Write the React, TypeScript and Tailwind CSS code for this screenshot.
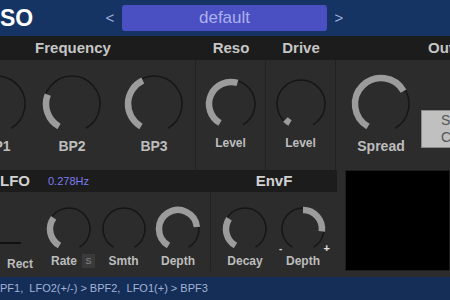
import React from 'react';

type KnobProps = {
  size: number;
  r: number;
  v: number;
  bi?: boolean;
};

const pt = (c: number, r: number, deg: number) => {
  const a = ((deg - 90) * Math.PI) / 180;
  return [c + r * Math.cos(a), c + r * Math.sin(a)];
};

const arc = (c: number, r: number, a0: number, a1: number) => {
  const [x0, y0] = pt(c, r, a0);
  const [x1, y1] = pt(c, r, a1);
  const large = a1 - a0 > 180 ? 1 : 0;
  return `M ${x0} ${y0} A ${r} ${r} 0 ${large} 1 ${x1} ${y1}`;
};

const Knob: React.FC<KnobProps> = ({ size, r, v, bi }) => {
  const c = size / 2;
  const end = -150 + v * 300;
  const start = bi ? 0 : -150;
  return (
    <svg width={size} height={size} viewBox={`0 0 ${size} ${size}`}>
      <path d={arc(c, r + 2, -150, 150)} fill="none" stroke="#161616" strokeWidth={1.5} />
      {end > start + 0.5 && (
        <path d={arc(c, r, start, end)} fill="none" stroke="#9c9c9c" strokeWidth={6.5} />
      )}
    </svg>
  );
};

const BigKnob = ({ label, v, className = '' }: { label: string; v: number; className?: string }) => (
  <div className={`flex w-[62px] flex-col items-center pt-[13px] ${className}`}>
    <Knob size={62} r={26} v={v} />
    <span className="mt-[3px] text-[14px] font-bold leading-4 text-[#bdbdbd]">{label}</span>
  </div>
);

const MidKnob = ({ label, v }: { label: string; v: number }) => (
  <div className="flex flex-col items-center pt-[17px]">
    <Knob size={54} r={22} v={v} />
    <span className="mt-[5px] text-[12px] font-bold leading-[14px] text-[#bdbdbd]">{label}</span>
  </div>
);

const SmallKnob = ({ v, bi, children }: { v: number; bi?: boolean; children: React.ReactNode }) => (
  <div className="flex flex-col items-center pt-[13px]">
    <Knob size={48} r={19} v={v} bi={bi} />
    <div className="mt-[1px] flex items-center text-[12px] font-bold leading-[14px] text-[#bdbdbd]">{children}</div>
  </div>
);

export default function App() {
  return (
    <div
      className="flex h-[300px] w-[450px] flex-col overflow-hidden bg-[#2c2c2c]"
      style={{ fontFamily: '"Liberation Sans", Arial, sans-serif' }}
    >
      {/* title bar */}
      <div className="flex h-[36px] shrink-0 items-center bg-[#163463]">
        <div className="w-[100px] text-[23px] font-bold leading-none text-white">SO</div>
        <div className="w-[20px] text-center text-[15px] text-[#9fb0dd]">&lt;</div>
        <div className="ml-[2px] flex h-[26px] w-[205px] items-center justify-center rounded-[3px] bg-[#4a4fc2] text-[17px] text-[#aab1ee]">
          default
        </div>
        <div className="w-[24px] text-center text-[15px] text-[#9fb0dd]">&gt;</div>
      </div>

      {/* section titles */}
      <div className="flex h-[24px] shrink-0 items-center bg-[#1c1c1c] text-[15px] font-bold text-[#c6c6c6]">
        <div className="-ml-[50px] w-[246px] shrink-0 text-center">Frequency</div>
        <div className="w-[70px] shrink-0 text-center">Reso</div>
        <div className="w-[70px] shrink-0 text-center">Drive</div>
        <div className="shrink-0 pl-[92px]">Output</div>
      </div>

      {/* main knobs */}
      <div className="flex h-[110px] shrink-0">
        <div className="-ml-[46px] flex w-[242px] shrink-0 border-r border-[#222] pl-[12px]">
          <BigKnob label="BP1" v={0.2} />
          <BigKnob label="BP2" v={0.27} className="ml-[13px]" />
          <BigKnob label="BP3" v={0.415} className="ml-[20px]" />
        </div>
        <div className="flex w-[70px] shrink-0 justify-center border-r border-[#222]">
          <MidKnob label="Level" v={0.557} />
        </div>
        <div className="flex w-[70px] shrink-0 justify-center border-r border-[#222]">
          <MidKnob label="Level" v={0.05} />
        </div>
        <div className="flex shrink-0">
          <div className="ml-[5px] flex w-[80px] justify-center">
            <BigKnob label="Spread" v={0.7} />
          </div>
          <div className="mt-[50px] flex h-[38px] w-[70px] flex-col justify-center border border-[#8a8a8a] bg-[#c0c0c0] pl-[19px] text-[14px] leading-[17px] text-[#555]">
            <span>Stereo</span>
            <span>Chan</span>
          </div>
        </div>
      </div>

      {/* lfo / env */}
      <div className="flex h-[101px] shrink-0">
        <div className="flex w-[337px] shrink-0 flex-col">
          <div className="flex h-[22px] shrink-0 items-center bg-[#1c1c1c]">
            <div className="flex w-[211px] items-center">
              <span className="text-[15px] font-bold text-[#d2d2d2]">LFO</span>
              <span className="ml-[18px] text-[11px] text-[#7c7cf2]">0.278Hz</span>
            </div>
            <div className="w-[126px] text-center text-[15px] font-bold text-[#d2d2d2]">EnvF</div>
          </div>
          <div className="flex flex-1">
            <div className="flex w-[211px] border-r border-[#222]">
              <div className="flex w-[42px] flex-col">
                <div className="mt-[50px] h-[2px] w-[21px] bg-[#111]" />
                <span className="mt-[13px] pl-[7px] text-[12px] font-bold leading-[14px] text-[#bdbdbd]">Rect</span>
              </div>
              <div className="flex w-[54px] justify-center">
                <SmallKnob v={0.32}>
                  <span className="ml-[8px]">Rate</span>
                  <span className="ml-[5px] flex h-[14px] w-[13px] items-center justify-center bg-[#3a3a3a] text-[9px] font-normal text-[#8a8a8a]">
                    S
                  </span>
                </SmallKnob>
              </div>
              <div className="flex w-[55px] justify-center">
                <SmallKnob v={0}>Smth</SmallKnob>
              </div>
              <div className="flex w-[54px] justify-center">
                <SmallKnob v={0.78}>Depth</SmallKnob>
              </div>
            </div>
            <div className="flex w-[126px] pl-[5px]">
              <div className="flex w-[58px] justify-center">
                <SmallKnob v={0.31}>Decay</SmallKnob>
              </div>
              <div className="relative flex w-[58px] justify-center">
                <SmallKnob v={0.823} bi>Depth</SmallKnob>
                <span className="absolute left-[5px] top-[49px] text-[10px] font-bold text-[#cfcfcf]">-</span>
                <span className="absolute right-[2px] top-[48px] text-[11px] font-bold text-[#e0e0e0]">+</span>
              </div>
            </div>
          </div>
        </div>
        <div className="ml-[8px] flex-1 border border-[#1e1e1e] bg-black" />
      </div>

      <div className="h-[6px] shrink-0" />

      {/* status */}
      <div className="flex h-[23px] shrink-0 items-center bg-[#142e57] text-[11px] whitespace-pre text-[#a3b2d6]">
        PF1,  LFO2(+/-) &gt; BPF2,  LFO1(+) &gt; BPF3
      </div>
    </div>
  );
}
